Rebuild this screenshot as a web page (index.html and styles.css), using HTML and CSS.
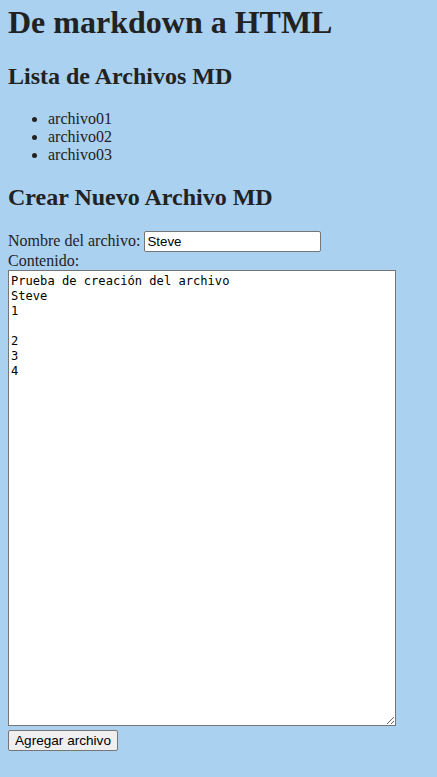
FILE: index.html
```html
<!DOCTYPE html>
<html lang="es">
<head>
<meta charset="utf-8">
<title>De markdown a HTML</title>
<link rel="stylesheet" href="styles.css">
</head>
<body>
<h1 class="title">De markdown a HTML</h1>
<h2 class="section">Lista de Archivos MD</h2>
<ul class="files">
  <li>archivo01</li>
  <li>archivo02</li>
  <li>archivo03</li>
</ul>
<h2 class="section">Crear Nuevo Archivo MD</h2>
<form class="form">
  <div class="row"><label for="nombre">Nombre del archivo:</label> <input id="nombre" class="name" type="text" value="Steve"></div>
  <div class="row"><label for="contenido">Contenido:</label></div>
  <textarea id="contenido" class="content">Prueba de creación del archivo
Steve
1

2
3
4</textarea>
  <div class="row"><button type="button" class="btn">Agregar archivo</button></div>
</form>
</body>
</html>
```
FILE: styles.css
```css
html, body {
  background: #aad1f0;
}
body {
  margin: 0 8px 8px;
  font-family: "Liberation Serif", serif;
  font-size: 16px;
  color: #222;
}
.title {
  font-size: 32px;
  margin: 4px 0 22px;
}
.section {
  font-size: 24px;
  margin: 20px 0;
}
.files {
  margin: 16px 0;
  padding-left: 40px;
}
.form {
  margin: 0;
}
.row {
  line-height: 18px;
}
.name {
  font-family: "Liberation Sans", Arial, sans-serif;
  font-size: 13.33px;
  width: 177px;
  height: 21px;
  box-sizing: border-box;
  border: 1px solid #767676;
  border-radius: 2px;
  padding: 1px 2px;
  background: #fff;
  color: #000;
  margin: 0;
}
.content {
  display: block;
  width: 388px;
  height: 456px;
  box-sizing: border-box;
  margin: 0;
  padding: 3px 2px 2px;
  border: 1px solid #767676;
  font-family: "DejaVu Sans Mono", monospace;
  font-size: 12.1px;
  line-height: 15px;
  color: #000;
  background: #fff;
}
.btn {
  font-family: "Liberation Sans", Arial, sans-serif;
  font-size: 13.6px;
  height: 21px;
  padding: 1px 6px;
  border: 1px solid #767676;
  border-radius: 2px;
  background: #efefef;
  color: #000;
  margin: 4px 0 0;
}
```
